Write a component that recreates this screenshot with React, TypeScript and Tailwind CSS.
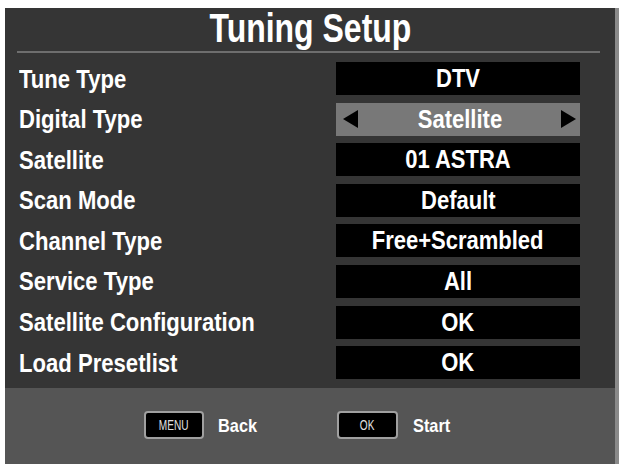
import React from "react";

const sans = { fontFamily: '"Liberation Sans Narrow", "Liberation Sans", Arial, sans-serif' };

const rows: { label: string; value: string; active?: boolean }[] = [
  { label: "Tune Type", value: "DTV" },
  { label: "Digital Type", value: "Satellite", active: true },
  { label: "Satellite", value: "01 ASTRA" },
  { label: "Scan Mode", value: "Default" },
  { label: "Channel Type", value: "Free+Scrambled" },
  { label: "Service Type", value: "All" },
  { label: "Satellite Configuration", value: "OK" },
  { label: "Load Presetlist", value: "OK" },
];

function Arrow({ dir }: { dir: "left" | "right" }) {
  return (
    <svg width="15" height="18" viewBox="0 0 15 18" className="shrink-0">
      {dir === "left" ? (
        <polygon points="15,0 15,18 0,9" fill="#000" />
      ) : (
        <polygon points="0,0 0,18 15,9" fill="#000" />
      )}
    </svg>
  );
}

export default function App() {
  return (
    <div className="w-[621px] h-[464px] bg-white overflow-hidden" style={sans}>
      <div className="ml-[5px] mt-[8px] w-[610px] h-[456px] flex flex-col border-r-[4px] border-[#8a8a8a] box-content">
        <div className="bg-[#353535] flex flex-col">
          <div className="h-[43px] flex items-center justify-center text-white font-bold text-[41px] leading-none pb-[3px]">
            <span className="scale-x-[0.78] whitespace-nowrap">Tuning Setup</span>
          </div>
          <div className="ml-[12px] mr-[15px] h-[2px] bg-[#6e6e6e]" />
          <div className="flex flex-col gap-[7.6px] pt-[9px] pb-[9px]">
            {rows.map((r) => (
              <div key={r.label} className="flex items-center h-[33px]">
                <div className="pl-[14px] w-[331px] text-white font-bold text-[26px] leading-none">
                  <span className="block origin-left scale-x-[0.85] whitespace-nowrap">{r.label}</span>
                </div>
                {r.active ? (
                  <div className="w-[244px] h-full bg-[#787878] flex items-center justify-between pl-[7px] pr-[4px]">
                    <Arrow dir="left" />
                    <span className="text-white font-bold text-[25px] leading-none scale-x-[0.88] whitespace-nowrap">{r.value}</span>
                    <Arrow dir="right" />
                  </div>
                ) : (
                  <div className="w-[244px] h-full bg-black flex items-center justify-center text-white font-bold text-[25px] leading-none">
                    <span className="scale-x-[0.88] whitespace-nowrap">{r.value}</span>
                  </div>
                )}
              </div>
            ))}
          </div>
        </div>
        <div className="flex-1 bg-[#555555] flex items-center pl-[139px] pb-[2px]">
          <div className="flex items-center">
            <div className="w-[60px] h-[28px] rounded-[4px] border-2 border-[#a0a0a0] bg-black flex items-center justify-center text-[#e0e0e0] text-[14px] leading-none">
              <span className="scale-x-[0.72]">MENU</span>
            </div>
            <span className="ml-[14px] w-[119px] text-white font-bold text-[19px] leading-none">
              <span className="block origin-left scale-x-[0.86]">Back</span>
            </span>
          </div>
          <div className="flex items-center">
            <div className="w-[61px] h-[28px] rounded-[4px] border-2 border-[#a0a0a0] bg-black flex items-center justify-center text-[#e0e0e0] text-[14px] leading-none">
              <span className="scale-x-[0.72]">OK</span>
            </div>
            <span className="ml-[15px] text-white font-bold text-[19px] leading-none">
              <span className="block origin-left scale-x-[0.86]">Start</span>
            </span>
          </div>
        </div>
      </div>
    </div>
  );
}
